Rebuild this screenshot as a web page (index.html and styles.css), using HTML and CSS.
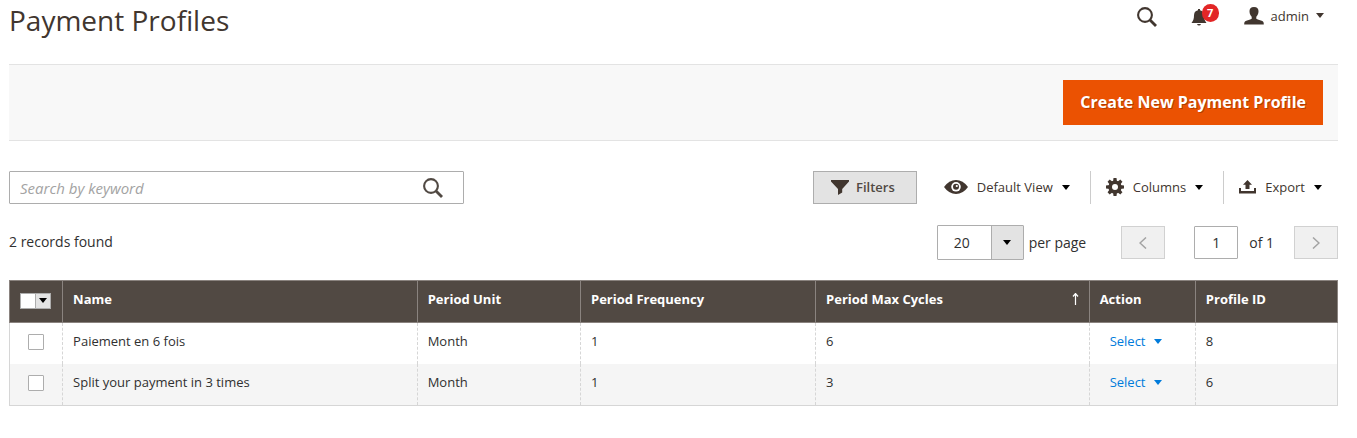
FILE: index.html
```html
<!DOCTYPE html>
<html lang="en">
<head>
<meta charset="utf-8">
<meta name="viewport" content="width=device-width, initial-scale=1">
<title>Payment Profiles</title>
<link rel="stylesheet" href="styles.css">
</head>
<body>
<svg class="sprite" aria-hidden="true">
  <symbol id="search" viewBox="0 0 20 20"><circle cx="8" cy="8" r="6.900" fill="none" stroke="currentColor" stroke-width="2.100"/><path d="M13 13l6 6" fill="none" stroke="currentColor" stroke-width="2.800"/></symbol>
  <symbol id="caret" viewBox="0 0 8 5"><path d="M0 0h8L4 5z" fill="currentColor"/></symbol>
  <symbol id="left" viewBox="0 0 8 12"><path d="M7 0.5L1 6l6 5.500" fill="none" stroke="currentColor" stroke-width="1.500"/></symbol>
  <symbol id="right" viewBox="0 0 8 12"><path d="M1 0.5L7 6l-6 5.500" fill="none" stroke="currentColor" stroke-width="1.500"/></symbol>
</svg>
<div class="page">
  <header class="header">
    <h1 class="title">Payment Profiles</h1>
    <div class="tools">
      <button class="plain" type="button" aria-label="Search"><svg class="icon-search"><use href="#search"/></svg></button>
      <button class="plain bell" type="button" aria-label="Notifications">
        <svg class="icon-bell" viewBox="0 0 16 18"><path d="M7 1h2v1.300c3 .5 4 2.700 4 5.200 0 3.500.8 5 2.500 7.500H.5C2.200 12.500 3 11 3 7.500 3 5 4 2.800 7 2.300zM6 16h4q-.5 1.500-2 1.500T6 16z" fill="currentColor"/></svg>
        <span class="badge">7</span>
      </button>
      <button class="plain user" type="button">
        <svg class="icon-user" viewBox="0 0 20 18"><path d="M10 0c3.200 0 4.700 1.800 4.500 4.500-.1 2.500-1 4-2.200 5.200v2.100c1 .9 3.200 1.200 5.400 2 1.700.6 2.100 1.500 2.100 3.700H.2c0-2.200.4-3.100 2.100-3.700 2.200-.8 4.400-1.100 5.400-2V9.700C6.500 8.500 5.600 7 5.500 4.500 5.300 1.800 6.800 0 10 0z" fill="currentColor"/></svg>
        <span>admin</span>
        <svg class="caret"><use href="#caret"/></svg>
      </button>
    </div>
  </header>

  <div class="actions"><button class="primary" type="button">Create New Payment Profile</button></div>

  <div class="toolbar">
    <form class="search">
      <input class="search-input" type="text" placeholder="Search by keyword" aria-label="Search by keyword">
      <button class="plain" type="button" aria-label="Submit search"><svg class="icon-search"><use href="#search"/></svg></button>
    </form>
    <div class="views">
      <button class="filters" type="button"><svg class="icon-funnel" viewBox="0 0 18 15"><path d="M0 0h18v1.500L11.200 9v3.500L7 15V9L0 1.500z" fill="currentColor"/></svg>Filters</button>
      <button class="view default-view" type="button">
        <svg class="icon-eye" viewBox="0 0 24 14"><path d="M0 7Q5 0 12 0t12 7q-5 7-12 7T0 7z" fill="currentColor"/><circle cx="12" cy="6.800" r="4.800" fill="#fff"/><circle cx="12" cy="6.800" r="3" fill="currentColor"/><circle cx="12.800" cy="6" r="1.100" fill="#fff"/></svg>
        <span>Default View</span><svg class="caret"><use href="#caret"/></svg>
      </button>
      <button class="view" type="button">
        <svg class="icon-gear" viewBox="-9 -9 18 18"><g fill="currentColor"><path id="tooth" d="M-2-5l.5-4h3L2-5v10l-.5 4h-3L-2 5z"/><use href="#tooth" transform="rotate(45)"/><use href="#tooth" transform="rotate(90)"/><use href="#tooth" transform="rotate(135)"/><circle r="6.600"/></g><circle r="3" fill="#fff"/></svg>
        <span>Columns</span><svg class="caret"><use href="#caret"/></svg>
      </button>
      <button class="view" type="button">
        <svg class="icon-export" viewBox="0 0 17 14"><path d="M8.500 0L13 4.800h-2.500V9h-4V4.800H4zM0 8h2v3h13V8h2v5.500H0z" fill="currentColor"/></svg>
        <span>Export</span><svg class="caret"><use href="#caret"/></svg>
      </button>
    </div>
  </div>

  <div class="pagebar">
    <div>2 records found</div>
    <div class="pager">
      <div class="size">
        <select class="size-select" id="size"><option>20</option></select>
        <span class="size-arrow"><svg class="caret"><use href="#caret"/></svg></span>
      </div>
      <label class="size-label" for="size">per page</label>
      <button class="step" type="button" aria-label="Previous page" disabled><svg class="chevron"><use href="#left"/></svg></button>
      <input class="current" id="current" type="text" value="1" aria-label="Current page">
      <label class="total" for="current">of 1</label>
      <button class="step" type="button" aria-label="Next page" disabled><svg class="chevron"><use href="#right"/></svg></button>
    </div>
  </div>

  <table class="grid">
    <colgroup><col class="c-check"><col class="c-name"><col class="c-unit"><col class="c-freq"><col class="c-max"><col class="c-action"><col class="c-id"></colgroup>
    <thead>
      <tr>
        <th class="check-head"><div class="multi"><input class="multi-box" type="checkbox" aria-label="Select all"><button class="multi-arrow" type="button" aria-label="Selection options"><svg class="caret"><use href="#caret"/></svg></button></div></th>
        <th>Name</th><th>Period Unit</th><th>Period Frequency</th>
        <th><div class="sorted">Period Max Cycles<svg class="icon-sort" viewBox="0 0 7 12"><path d="M3.500 12V1M1 3.500l2.500-3 2.500 3" fill="none" stroke="currentColor" stroke-width="1.200"/></svg></div></th>
        <th>Action</th><th>Profile ID</th>
      </tr>
    </thead>
    <tbody>
      <tr>
        <td class="check-cell"><input class="check" type="checkbox" aria-label="Select Paiement en 6 fois"></td>
        <td>Paiement en 6 fois</td><td>Month</td><td>1</td><td>6</td>
        <td><button class="select" type="button">Select<svg class="caret"><use href="#caret"/></svg></button></td><td>8</td>
      </tr>
      <tr>
        <td class="check-cell"><input class="check" type="checkbox" aria-label="Select Split your payment in 3 times"></td>
        <td>Split your payment in 3 times</td><td>Month</td><td>1</td><td>3</td>
        <td><button class="select" type="button">Select<svg class="caret"><use href="#caret"/></svg></button></td><td>6</td>
      </tr>
    </tbody>
  </table>
</div>
</body>
</html>
```
FILE: styles.css
```css
* { box-sizing: border-box; }
body { margin: 0; background: #fff; color: #303030; font: 14px/20px "Open Sans", sans-serif; }
button, input, select { margin: 0; font: inherit; color: inherit; border-radius: 0; }
svg { display: block; flex: none; }
.sprite { position: absolute; width: 0; height: 0; }
.page { padding: 0 19px 0 9px; }

.plain { display: flex; align-items: center; padding: 0; border: 0; background: none; color: #41362f; }
.caret { width: 8px; height: 5px; }
.icon-search { width: 20px; height: 20px; }

.header { display: flex; justify-content: space-between; align-items: flex-start; height: 64px; }
.title { margin: 0; font-size: 28px; font-weight: 400; line-height: 40px; color: #41362f; }
.tools { display: flex; align-items: center; padding: 4px 14px 0 0; height: 30px; }
.bell { position: relative; margin-left: 34px; }
.icon-bell { width: 16px; height: 18px; }
.badge { position: absolute; left: 11px; top: -4px; width: 17px; height: 18px; border-radius: 9px; background: #e22626; color: #fff; font-size: 11px; font-weight: 700; line-height: 18px; text-align: center; }
.user { margin: 0 0 3px 37px; gap: 7px; font-size: 13px; }
.icon-user { width: 20px; height: 18px; }

.actions { display: flex; justify-content: flex-end; padding: 15px; border-top: 1px solid #e3e3e3; border-bottom: 1px solid #e3e3e3; background: #f8f8f8; }
.primary { height: 45px; padding: 0 17px 2px; border: 0; background: #eb5202; color: #fff; font-size: 16px; font-weight: 700; text-shadow: 1px 1px 0 rgba(0, 0, 0, .25); }

.toolbar { display: flex; justify-content: space-between; margin-top: 30px; }
.search { display: flex; align-items: center; width: 455px; height: 33px; padding-right: 20px; border: 1px solid #adadad; border-radius: 1px; color: #514943; }
.search .plain { color: inherit; }
.search-input { flex: 1; min-width: 0; height: 31px; padding: 0 10px; border: 0; background: none; outline: 0; font-size: 15px; }
.search-input::placeholder { color: #a3a3a3; font-style: italic; opacity: 1; }
.views { display: flex; height: 33px; }
.filters { display: flex; align-items: center; gap: 7px; padding: 0 21px 1px 17px; border: 1px solid #adadad; background: #e3e3e3; color: #514943; font-size: 13px; font-weight: 600; }
.icon-funnel { width: 18px; height: 15px; color: #41362f; }
.view { display: flex; align-items: center; gap: 9px; margin: 0; padding: 0 20px 1px 15px; border: 0; border-left: 1px solid #ccc; background: none; color: #41362f; font-size: 13px; }
.view:last-child { padding-right: 16px; }
.view .caret { color: #000; }
.default-view { padding-left: 27px; border-left: 0; }
.icon-eye { width: 24px; height: 14px; }
.icon-gear { width: 18px; height: 18px; }
.icon-export { width: 17px; height: 14px; }

.pagebar { display: flex; justify-content: space-between; align-items: flex-start; margin-top: 21px; line-height: 34px; }
.pager { display: flex; align-items: center; }
.size { display: flex; width: 87px; height: 35px; border: 1px solid #adadad; border-radius: 1px; }
.size-select { flex: 1; min-width: 0; padding: 0 16px; appearance: none; border: 0; background: #fff; outline: 0; }
.size-arrow { display: flex; align-items: center; justify-content: center; width: 32px; border-left: 1px solid #adadad; background: #e3e3e3; color: #000; }
.size-label { margin: 0 35px 0 5px; }
.step { display: flex; align-items: center; justify-content: center; width: 44px; height: 33px; padding: 0; border: 1px solid #d1d1d1; background: #f0f0f0; color: #a3a3a3; }
.chevron { width: 8px; height: 12px; }
.current { width: 44px; height: 33px; margin-left: 29px; padding: 0; border: 1px solid #adadad; border-radius: 1px; text-align: center; }
.total { margin: 0 20px 0 11px; }

.grid { width: 100%; margin-top: 20px; table-layout: fixed; border-collapse: collapse; border: 1px solid #d6d6d6; font-size: 13px; }
.c-check { width: 4%; }
.c-name { width: 26.7%; }
.c-unit { width: 12.3%; }
.c-freq { width: 17.7%; }
.c-max { width: 20.6%; }
.c-action { width: 8%; }
.grid th { height: 42px; padding: 0 10px 6px; border: 1px solid #8a837f; background: #514943; color: #fff; font-weight: 700; text-align: left; }
.grid td { height: 41px; padding: 0 10px 4px; border-left: 1px dashed #d6d6d6; }
.grid tr:last-child td { height: 42px; }
.grid td:first-child { border-left-style: solid; }
.grid tbody tr:nth-child(even) { background: #f5f5f5; }
.grid .check-head { padding: 0 10px 2px; }
.grid .check-cell { padding: 0 18px 2px; }
.check { display: block; width: 16px; height: 16px; appearance: none; border: 1px solid #adadad; border-radius: 1px; background: #fff; }
.multi { display: flex; width: 31px; height: 16px; border: 1px solid #adadad; background: #fff; }
.multi-box { width: 14px; height: 14px; appearance: none; }
.multi-arrow { display: flex; flex: 1; align-items: center; justify-content: center; padding: 0; border: 0; border-left: 1px solid #adadad; background: #e3e3e3; color: #000; }
.sorted { display: flex; align-items: center; justify-content: space-between; }
.icon-sort { width: 7px; height: 12px; }
.select { display: flex; align-items: center; gap: 8px; padding: 0 10px; border: 0; background: none; color: #007bdb; }
```
